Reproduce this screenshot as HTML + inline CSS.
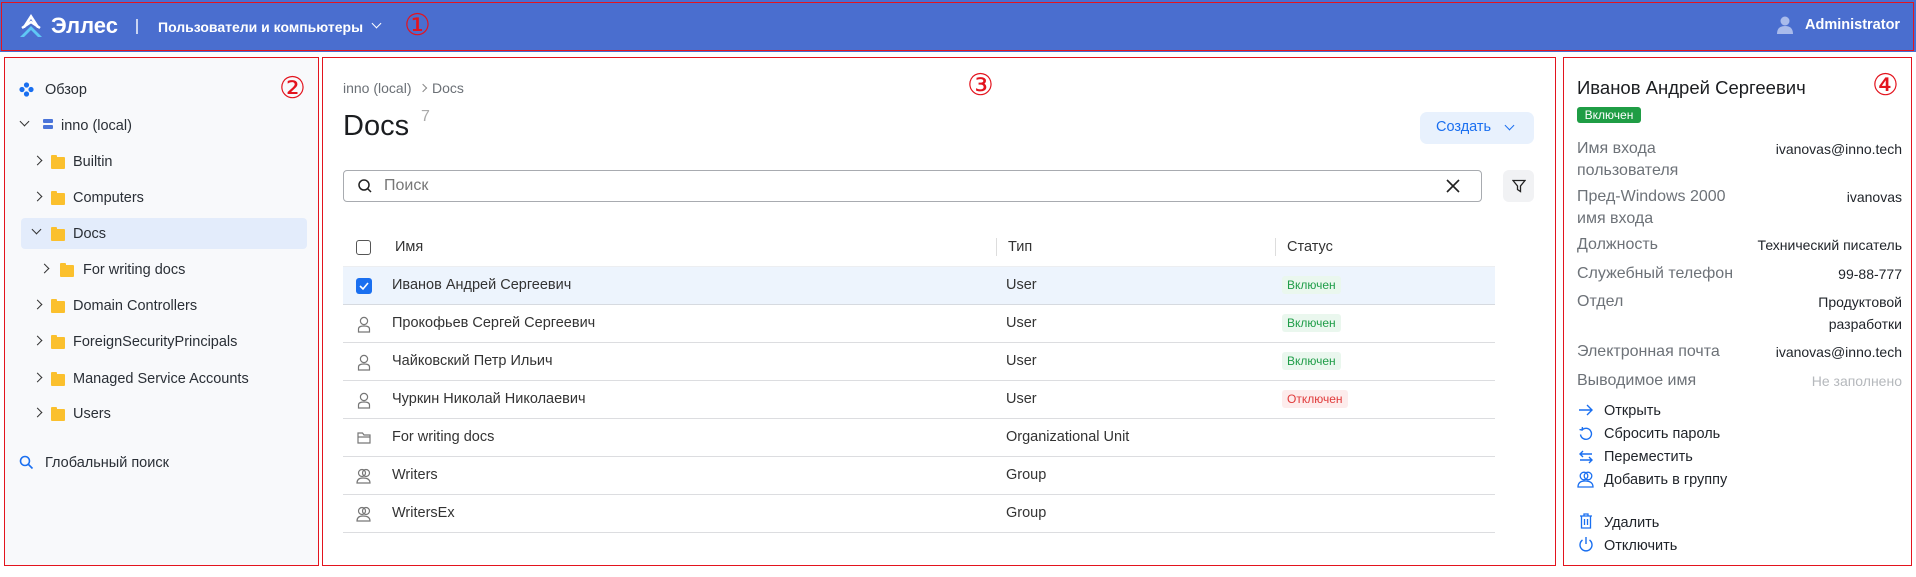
<!DOCTYPE html>
<html><head><meta charset="utf-8"><style>
*{box-sizing:border-box;margin:0;padding:0}
body{width:1916px;height:577px;position:relative;overflow:hidden;background:#fff;font-family:"Liberation Sans","DejaVu Sans",sans-serif;color:#222}
.a{position:absolute;white-space:nowrap}
.rb{position:absolute;border:1.5px solid #e3141e}
.num{position:absolute;color:#e3141e;font-family:"DejaVu Sans",sans-serif;font-size:30px;line-height:30px}
.li{position:absolute;font-size:14.5px;color:#2a2f36;line-height:18px}
.fold{position:absolute;width:14px;height:12px;background:#fbc02d;border-radius:1px}
.fold:before{content:"";position:absolute;left:0;top:-2px;width:6px;height:3px;background:#fbc02d;border-radius:1px 1px 0 0}
.chev{position:absolute;width:7px;height:7px;border-right:1.6px solid #333;border-bottom:1.6px solid #333}
.row{position:absolute;left:343px;width:1152px;height:38px;border-bottom:1px solid #dcdde0}
.rt{position:absolute;font-size:14.5px;color:#333;top:10px}
.ok{position:absolute;left:939px;top:9px;background:#eaf7ee;color:#1f9d48;font-size:12px;padding:2px 5px;border-radius:3px}
.lbl{position:absolute;left:1577px;font-size:16px;color:#6d7278;line-height:22px}
.val{position:absolute;right:14px;font-size:14px;color:#1f2329;text-align:right;line-height:22px}
.act{position:absolute;left:1604px;font-size:14.5px;color:#1f2329}
</style></head><body>
<!-- header -->
<div class="a" style="left:0;top:0;width:1916px;height:52px;background:#4a6ecf"></div>
<div class="rb" style="left:1px;top:2px;width:1913px;height:49px"></div>
<svg class="a" style="left:18px;top:13px" width="26" height="26" viewBox="0 0 26 26"><path d="M13 1 L4 15 L7 15 L13 6 L19 15 L22 15 Z" fill="#fff"/><path d="M2 24 L13 13 L24 24 L20 24 L13 17 L6 24 Z" fill="#5fc8f5"/><path d="M4 15 L13 9 L22 15" stroke="#fff" stroke-width="2.5" fill="none"/></svg>
<div class="a" style="left:51px;top:13px;font-size:22px;font-weight:bold;color:#fff">Эллес</div>
<div class="a" style="left:136px;top:19px;width:1.5px;height:15px;background:#c9d4f2"></div>
<div class="a" style="left:158px;top:19px;font-size:14px;font-weight:bold;color:#fff">Пользователи и компьютеры</div>
<div class="chev" style="left:373px;top:20px;border-color:#fff;border-width:1.4px;transform:rotate(45deg)"></div>
<div class="num" style="left:404px;top:11px">①</div>
<svg class="a" style="left:1777px;top:16px" width="16" height="18"><circle cx="8" cy="5" r="4.5" fill="#a9bbeb"/><path d="M0 18 Q0 10 8 10 Q16 10 16 18Z" fill="#a9bbeb"/></svg>
<div class="a" style="left:1805px;top:17px;font-size:14.5px;font-weight:bold;color:#fff">Administrator</div>

<!-- left -->
<div class="a" style="left:5px;top:58px;width:313px;height:507px;background:#f8f9fb"></div>
<div class="rb" style="left:4px;top:57px;width:315px;height:509px"></div>
<div class="num" style="left:279px;top:74px">②</div>
<svg class="a" style="left:19px;top:82px" width="15" height="15"><circle cx="7.5" cy="3" r="2.6" fill="#1a6ff0"/><circle cx="3" cy="7.5" r="2.6" fill="#1a6ff0"/><circle cx="12" cy="7.5" r="2.6" fill="#1a6ff0"/><circle cx="7.5" cy="12" r="2.6" fill="#1a6ff0"/></svg>
<div class="li" style="left:45px;top:81px">Обзор</div>
<div class="chev" style="left:21px;top:118px;transform:rotate(45deg)"></div>
<svg class="a" style="left:43px;top:119px" width="10" height="10"><rect x="0" y="0" width="10" height="4" rx="1" fill="#4a74d9"/><rect x="0" y="6" width="10" height="4" rx="1" fill="#4a74d9"/></svg>
<div class="li" style="left:61px;top:117px">inno (local)</div>
<div class="a" style="left:21px;top:218px;width:286px;height:31px;background:#e3ecfb;border-radius:4px"></div>
<div class="chev" style="left:34px;top:157px;transform:rotate(-45deg)"></div><div class="fold" style="left:51px;top:157px"></div><div class="li" style="left:73px;top:153px">Builtin</div>
<div class="chev" style="left:34px;top:193px;transform:rotate(-45deg)"></div><div class="fold" style="left:51px;top:193px"></div><div class="li" style="left:73px;top:189px">Computers</div>
<div class="chev" style="left:33px;top:226px;transform:rotate(45deg)"></div><div class="fold" style="left:51px;top:229px"></div><div class="li" style="left:73px;top:225px">Docs</div>
<div class="chev" style="left:41px;top:265px;transform:rotate(-45deg)"></div><div class="fold" style="left:60px;top:265px"></div><div class="li" style="left:83px;top:261px">For writing docs</div>
<div class="chev" style="left:34px;top:301px;transform:rotate(-45deg)"></div><div class="fold" style="left:51px;top:301px"></div><div class="li" style="left:73px;top:297px">Domain Controllers</div>
<div class="chev" style="left:34px;top:337px;transform:rotate(-45deg)"></div><div class="fold" style="left:51px;top:337px"></div><div class="li" style="left:73px;top:333px">ForeignSecurityPrincipals</div>
<div class="chev" style="left:34px;top:374px;transform:rotate(-45deg)"></div><div class="fold" style="left:51px;top:374px"></div><div class="li" style="left:73px;top:370px">Managed Service Accounts</div>
<div class="chev" style="left:34px;top:409px;transform:rotate(-45deg)"></div><div class="fold" style="left:51px;top:409px"></div><div class="li" style="left:73px;top:405px">Users</div>
<svg class="a" style="left:19px;top:455px" width="15" height="15"><circle cx="6" cy="6" r="4.5" stroke="#1a6ff0" stroke-width="1.6" fill="none"/><path d="M9.5 9.5 L13.5 13.5" stroke="#1a6ff0" stroke-width="1.6"/></svg>
<div class="li" style="left:45px;top:454px">Глобальный поиск</div>

<!-- center -->
<div class="rb" style="left:322px;top:57px;width:1234px;height:509px"></div>
<div class="num" style="left:967px;top:71px">③</div>
<div class="a" style="left:343px;top:80px;font-size:14px;color:#6b7076">inno (local)</div>
<div class="chev" style="left:420px;top:85px;width:6px;height:6px;border-color:#888;border-width:1.2px;transform:rotate(-45deg)"></div>
<div class="a" style="left:432px;top:80px;font-size:14px;color:#6b7076">Docs</div>
<div class="a" style="left:343px;top:110px;font-size:29px;color:#1b1d20">Docs</div>
<div class="a" style="left:421px;top:108px;font-size:16px;color:#aaa">7</div>
<div class="a" style="left:1420px;top:112px;width:114px;height:32px;background:#e8f1fd;border-radius:7px"></div>
<div class="a" style="left:1436px;top:119px;font-size:14.5px;color:#1a6ff0">Создать</div>
<div class="chev" style="left:1506px;top:122px;border-color:#1a6ff0;border-width:1.4px;transform:rotate(45deg)"></div>
<div class="a" style="left:343px;top:170px;width:1139px;height:32px;border:1px solid #a8abb0;border-radius:4px"></div>
<svg class="a" style="left:357px;top:178px" width="16" height="16"><circle cx="7" cy="7" r="5" stroke="#222" stroke-width="1.5" fill="none"/><path d="M10.5 10.5 L14 14" stroke="#222" stroke-width="1.5"/></svg>
<div class="a" style="left:384px;top:177px;font-size:16px;color:#777">Поиск</div>
<svg class="a" style="left:1446px;top:179px" width="14" height="14"><path d="M1 1L13 13M13 1L1 13" stroke="#222" stroke-width="1.6"/></svg>
<div class="a" style="left:1503px;top:170px;width:31px;height:32px;background:#f1f2f4;border-radius:6px"></div>
<svg class="a" style="left:1512px;top:179px" width="14" height="14"><path d="M1 1.5H13L8.5 7V12.5L5.5 10.5V7Z" stroke="#222" stroke-width="1.3" fill="none"/></svg>
<!-- table header -->
<div class="a" style="left:356px;top:240px;width:15px;height:15px;border:1.3px solid #555;border-radius:3px;background:#fff"></div>
<div class="a" style="left:395px;top:239px;font-size:14.5px;color:#333">Имя</div>
<div class="a" style="left:996px;top:238px;width:1px;height:18px;background:#ddd"></div>
<div class="a" style="left:1008px;top:239px;font-size:14.5px;color:#333">Тип</div>
<div class="a" style="left:1275px;top:238px;width:1px;height:18px;background:#ddd"></div>
<div class="a" style="left:1287px;top:239px;font-size:14.5px;color:#333">Статус</div>
<div class="a" style="left:343px;top:266px;width:1152px;height:1px;background:#eceef1"></div>
<!-- rows -->
<div class="row" style="top:267px;background:#edf4fd;border-color:#d6dae0">
 <div class="a" style="left:13px;top:11px;width:16px;height:16px;background:#1a6ff0;border-radius:3px"></div>
 <svg class="a" style="left:15px;top:13px" width="12" height="12"><path d="M2 6L5 9L10 3" stroke="#fff" stroke-width="1.6" fill="none"/></svg>
 <div class="rt" style="left:49px">Иванов Андрей Сергеевич</div><div class="rt" style="left:663px">User</div><div class="ok">Включен</div></div>
<div class="row" style="top:305px"><svg class="a" style="left:14px;top:11px" width="14" height="17"><circle cx="7" cy="5" r="3.6" stroke="#777" stroke-width="1.2" fill="none"/><path d="M1.5 16V13Q1.5 10 7 10Q12.5 10 12.5 13V16Z" stroke="#777" stroke-width="1.2" fill="none"/></svg><div class="rt" style="left:49px">Прокофьев Сергей Сергеевич</div><div class="rt" style="left:663px">User</div><div class="ok">Включен</div></div>
<div class="row" style="top:343px"><svg class="a" style="left:14px;top:11px" width="14" height="17"><circle cx="7" cy="5" r="3.6" stroke="#777" stroke-width="1.2" fill="none"/><path d="M1.5 16V13Q1.5 10 7 10Q12.5 10 12.5 13V16Z" stroke="#777" stroke-width="1.2" fill="none"/></svg><div class="rt" style="left:49px">Чайковский Петр Ильич</div><div class="rt" style="left:663px">User</div><div class="ok">Включен</div></div>
<div class="row" style="top:381px"><svg class="a" style="left:14px;top:11px" width="14" height="17"><circle cx="7" cy="5" r="3.6" stroke="#777" stroke-width="1.2" fill="none"/><path d="M1.5 16V13Q1.5 10 7 10Q12.5 10 12.5 13V16Z" stroke="#777" stroke-width="1.2" fill="none"/></svg><div class="rt" style="left:49px">Чуркин Николай Николаевич</div><div class="rt" style="left:663px">User</div><div class="ok" style="background:#fdecec;color:#e03a3a">Отключен</div></div>
<div class="row" style="top:419px"><svg class="a" style="left:14px;top:12px" width="14" height="14"><path d="M1 2H5.5L7 4H13V12H1Z M1 6H13" stroke="#777" stroke-width="1.2" fill="none"/></svg><div class="rt" style="left:49px">For writing docs</div><div class="rt" style="left:663px">Organizational Unit</div></div>
<div class="row" style="top:457px"><svg class="a" style="left:13px;top:11px" width="16" height="17"><circle cx="6" cy="5" r="3.5" stroke="#777" stroke-width="1.2" fill="none"/><circle cx="10" cy="5" r="3.5" stroke="#777" stroke-width="1.2" fill="none"/><path d="M1 15Q1 10 7 10Q14 10 14 15Z" stroke="#777" stroke-width="1.2" fill="none"/></svg><div class="rt" style="left:49px">Writers</div><div class="rt" style="left:663px">Group</div></div>
<div class="row" style="top:495px"><svg class="a" style="left:13px;top:11px" width="16" height="17"><circle cx="6" cy="5" r="3.5" stroke="#777" stroke-width="1.2" fill="none"/><circle cx="10" cy="5" r="3.5" stroke="#777" stroke-width="1.2" fill="none"/><path d="M1 15Q1 10 7 10Q14 10 14 15Z" stroke="#777" stroke-width="1.2" fill="none"/></svg><div class="rt" style="left:49px">WritersEx</div><div class="rt" style="left:663px">Group</div></div>

<!-- right -->
<div class="rb" style="left:1563px;top:57px;width:349px;height:509px"></div>
<div class="num" style="left:1872px;top:71px">④</div>
<div class="a" style="left:1577px;top:77px;font-size:18.5px;color:#1b1d20">Иванов Андрей Сергеевич</div>
<div class="a" style="left:1577px;top:107px;width:64px;height:16px;background:#1f9d45;border-radius:3px;color:#fff;font-size:12px;text-align:center;line-height:16px">Включен</div>
<div class="lbl" style="top:138px">Имя входа<br>пользователя</div><div class="val" style="top:138px">ivanovas@inno.tech</div>
<div class="lbl" style="top:186px">Пред-Windows 2000<br>имя входа</div><div class="val" style="top:186px">ivanovas</div>
<div class="lbl" style="top:234px">Должность</div><div class="val" style="top:234px">Технический писатель</div>
<div class="lbl" style="top:263px">Служебный телефон</div><div class="val" style="top:263px">99-88-777</div>
<div class="lbl" style="top:291px">Отдел</div><div class="val" style="top:291px">Продуктовой<br>разработки</div>
<div class="lbl" style="top:341px">Электронная почта</div><div class="val" style="top:341px">ivanovas@inno.tech</div>
<div class="lbl" style="top:370px">Выводимое имя</div><div class="val" style="top:370px;color:#b5b8bc">Не заполнено</div>
<svg class="a" style="left:1578px;top:403px" width="16" height="14"><path d="M1 7H14M9 2L14 7L9 12" stroke="#1a6ff0" stroke-width="1.4" fill="none"/></svg>
<div class="act" style="top:403px">Открыть</div>
<svg class="a" style="left:1578px;top:426px" width="16" height="16"><path d="M4 4A5.5 5.5 0 1 1 2.5 8.5M1.5 3.5L4 4L4.5 1" stroke="#1a6ff0" stroke-width="1.4" fill="none"/></svg>
<div class="act" style="top:426px">Сбросить пароль</div>
<svg class="a" style="left:1578px;top:449px" width="16" height="16"><path d="M2 5H14M5 2L2 5L5 8M14 11H2M11 8L14 11L11 14" stroke="#1a6ff0" stroke-width="1.4" fill="none"/></svg>
<div class="act" style="top:449px">Переместить</div>
<svg class="a" style="left:1577px;top:471px" width="18" height="18"><circle cx="7" cy="5" r="3.8" stroke="#1a6ff0" stroke-width="1.3" fill="none"/><circle cx="11" cy="5" r="3.8" stroke="#1a6ff0" stroke-width="1.3" fill="none"/><path d="M1 16Q1 10 8 10Q16 10 16 16Z" stroke="#1a6ff0" stroke-width="1.3" fill="none"/></svg>
<div class="act" style="top:472px">Добавить в группу</div>
<svg class="a" style="left:1579px;top:513px" width="14" height="16"><path d="M1 3H13M5 3V1H9V3M2.5 3V15H11.5V3M5.5 6V12M8.5 6V12" stroke="#1a6ff0" stroke-width="1.3" fill="none"/></svg>
<div class="act" style="top:515px">Удалить</div>
<svg class="a" style="left:1578px;top:536px" width="16" height="16"><path d="M4.5 4A6 6 0 1 0 11.5 4M8 1V8" stroke="#1a6ff0" stroke-width="1.4" fill="none"/></svg>
<div class="act" style="top:538px">Отключить</div>
</body></html>
